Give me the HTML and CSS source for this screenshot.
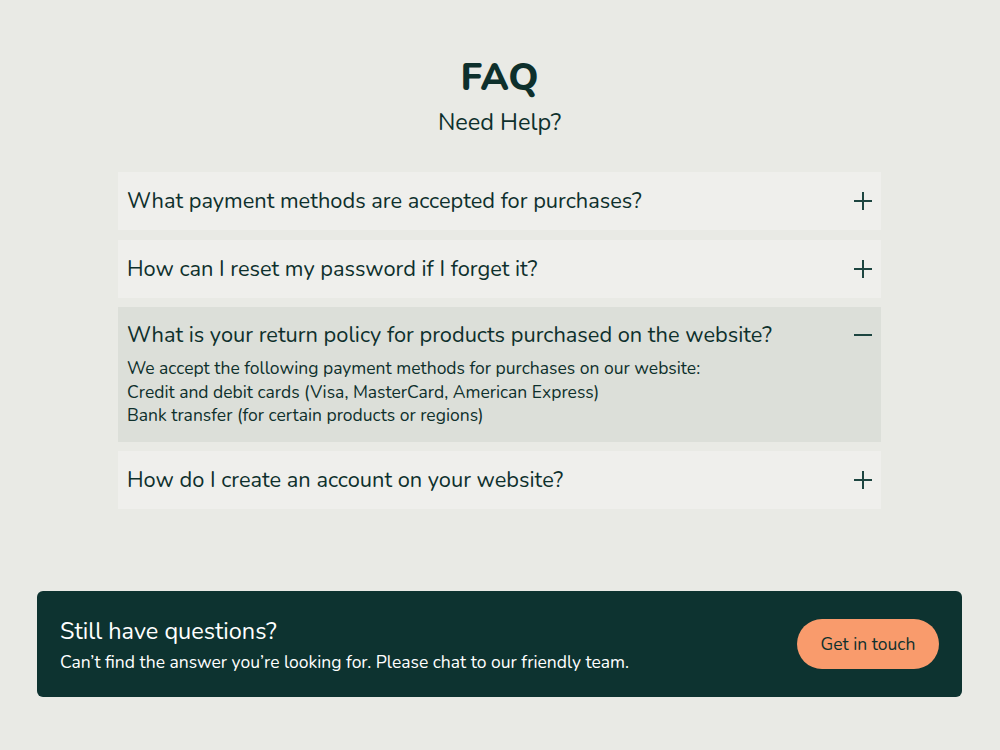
FILE: index.html
```html
<!DOCTYPE html>
<html lang="en">
<head>
    <meta charset="UTF-8">
    <meta name="viewport" content="width=device-width, initial-scale=1.0">
    <title>FAQ</title>
    <link rel="stylesheet" href="styles.css">
</head>
<body>
    <div class="page">
        <header class="faq-header">
            <h1>FAQ</h1>
            <p>Need Help?</p>
        </header>

        <!-- Questions -->
        <div class="faq-list">
            <div class="faq-item">
                <div class="faq-question">
                    <span>What payment methods are accepted for purchases?</span>
                    <span class="icon plus"></span>
                </div>
            </div>
            <div class="faq-item">
                <div class="faq-question">
                    <span>How can I reset my password if I forget it?</span>
                    <span class="icon plus"></span>
                </div>
            </div>
            <div class="faq-item open">
                <div class="faq-question">
                    <span>What is your return policy for products purchased on the website?</span>
                    <span class="icon minus"></span>
                </div>
                <div class="faq-answer">
                    We accept the following payment methods for purchases on our website:<br>
                    Credit and debit cards (Visa, MasterCard, American Express)<br>
                    Bank transfer (for certain products or regions)
                </div>
            </div>
            <div class="faq-item">
                <div class="faq-question">
                    <span>How do I create an account on your website?</span>
                    <span class="icon plus"></span>
                </div>
            </div>
        </div>

        <!-- Contact banner -->
        <div class="contact-banner">
            <div class="contact-text">
                <h2>Still have questions?</h2>
                <p>Can’t find the answer you’re looking for. Please chat to our friendly team.</p>
            </div>
            <button class="button">Get in touch</button>
        </div>
    </div>
</body>
</html>
```

FILE: styles.css
```css
/* General styles */
body {
    font-family: "Nunito", Lato, "Open Sans", sans-serif;
    background-color: #e9eae5;
    color: #0e302c;
    margin: 0;
    padding: 0;
}

.page {
    padding: 56px 38px 0 37px;
}

.faq-header {
    text-align: center;
}

.faq-header h1 {
    font-size: 38px;
    font-weight: 800;
    margin: 0;
    line-height: 44px;
}

.faq-header p {
    font-size: 23.5px;
    margin: 7px 0 0;
    line-height: 30px;
}

.faq-list {
    width: 763px;
    margin: 35px auto 0;
    display: flex;
    flex-direction: column;
    gap: 9.5px;
}

.faq-item {
    background-color: #efefec;
    padding: 0 9px;
}

.faq-item.open {
    background-color: #dcdfd9;
    padding-bottom: 14px;
}

.faq-question {
    display: flex;
    justify-content: space-between;
    align-items: center;
    height: 58px;
    font-size: 21.8px;
}

.faq-item.open .faq-question {
    height: 56px;
}

.icon {
    position: relative;
    width: 18px;
    height: 18px;
}

.icon::before,
.icon::after {
    content: "";
    position: absolute;
    background-color: #1d4540;
}

.icon::before {
    left: 0;
    right: 0;
    top: 8px;
    height: 2px;
}

.plus::after {
    top: 0;
    bottom: 0;
    left: 8px;
    width: 2px;
}

.faq-answer {
    font-size: 17.5px;
    line-height: 23.5px;
    margin-top: -6px;
}

.contact-banner {
    margin-top: 82px;
    background-color: #0d3330;
    border-radius: 6px;
    padding: 0 23px;
    height: 106px;
    display: flex;
    align-items: center;
    justify-content: space-between;
}

.contact-text h2 {
    color: #fff;
    font-size: 23.5px;
    font-weight: 400;
    margin: 0 0 3px;
}

.contact-text p {
    color: #fff;
    font-size: 17.5px;
    margin: 0;
}

.button {
    background-color: #f99b6c;
    color: #0e302c;
    border: none;
    border-radius: 25px;
    width: 142px;
    height: 50px;
    font-family: inherit;
    font-size: 17.5px;
    cursor: pointer;
}
```
